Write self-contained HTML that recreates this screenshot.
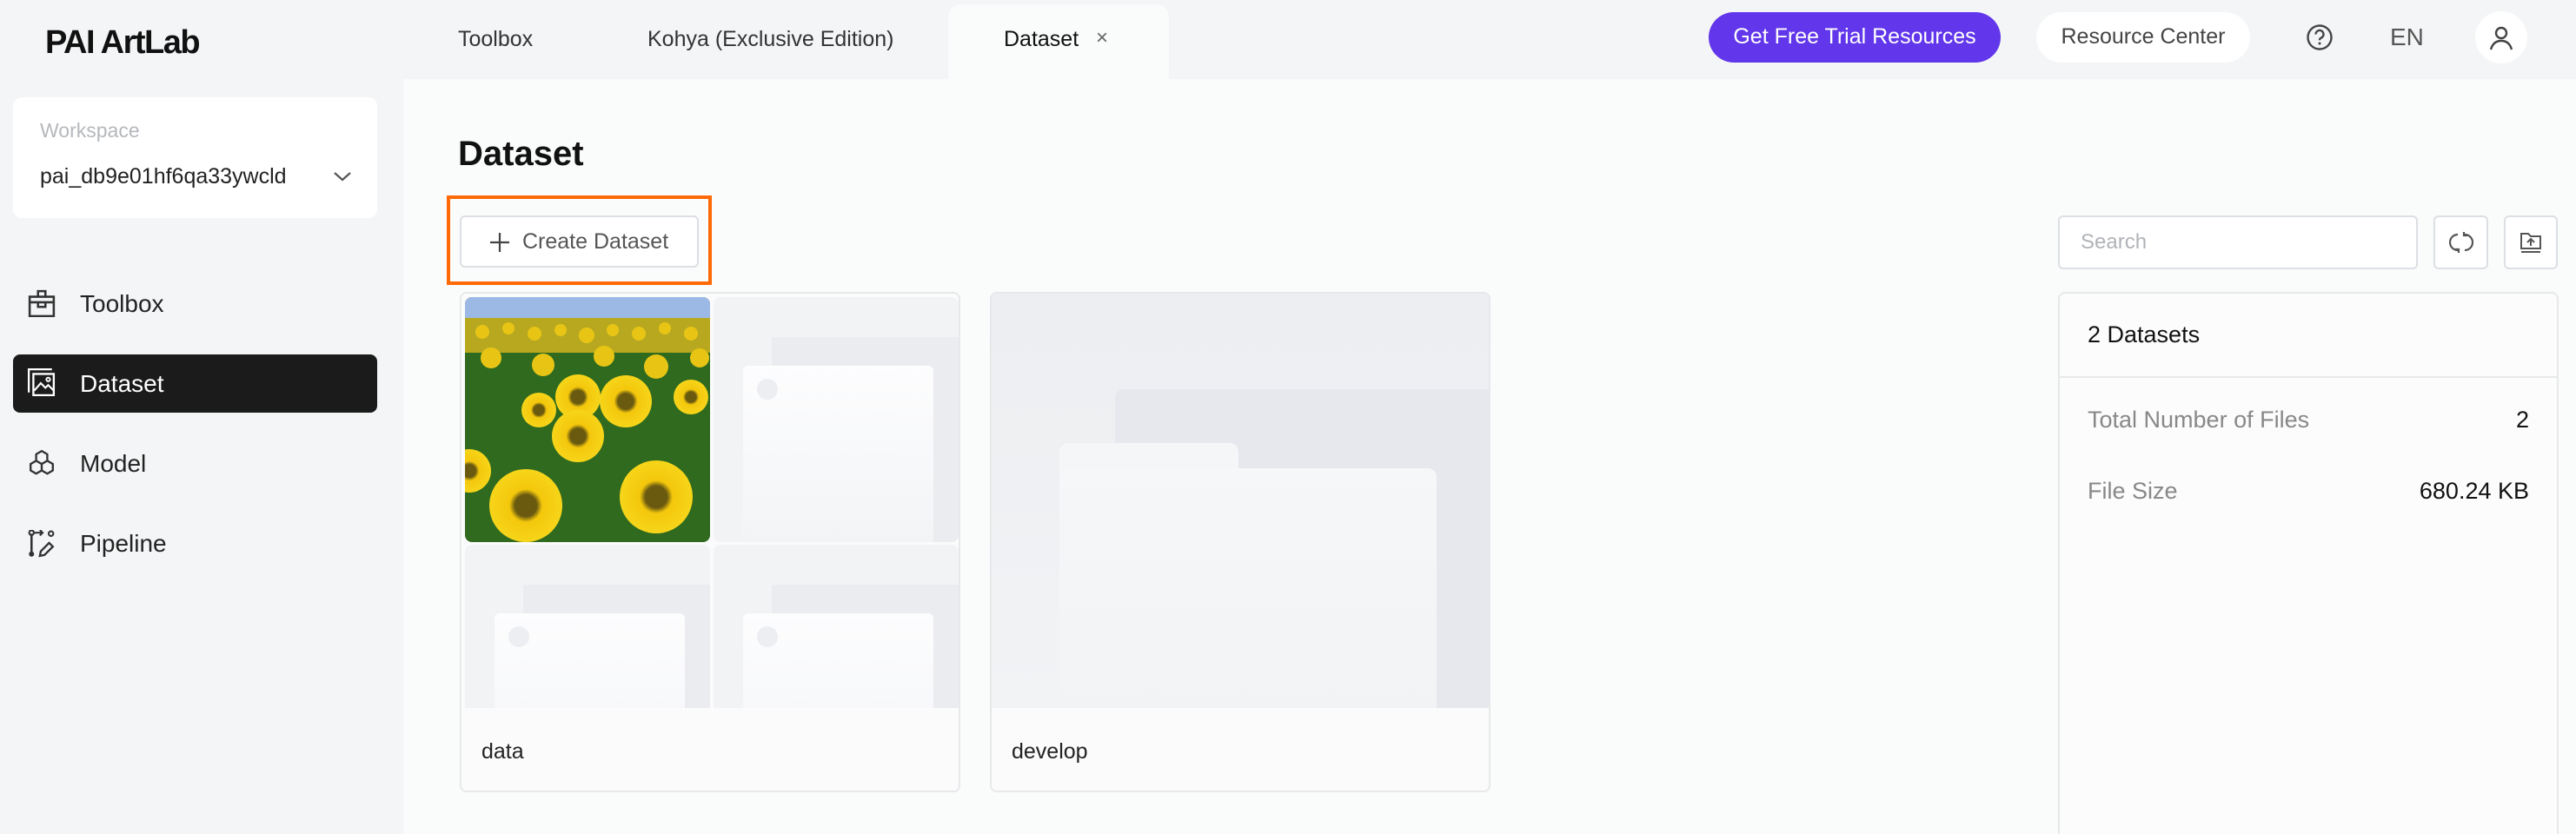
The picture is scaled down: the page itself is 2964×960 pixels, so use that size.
<!DOCTYPE html>
<html style="overflow:hidden;width:2964px;height:960px"><head><meta charset="utf-8"><style>
*{box-sizing:border-box;margin:0;padding:0}
body{width:2964px;height:960px;overflow:hidden;background:#f3f5f6;font-family:"Liberation Sans",sans-serif;color:#1f1f1f;position:relative}
.a{position:absolute}
.t{position:absolute;white-space:nowrap;line-height:1}
</style></head><body>
<!-- top bar -->
<div class="t" style="left:52px;top:30px;font-size:38px;font-weight:bold;letter-spacing:-1.5px;color:#111">PAI ArtLab</div>
<div class="t" style="left:527px;top:33px;font-size:25px;color:#333">Toolbox</div>
<div class="t" style="left:745px;top:33px;font-size:25px;color:#333">Kohya (Exclusive Edition)</div>
<div class="a" style="left:1091px;top:5px;width:254px;height:90px;background:#fafbfb;border-radius:14px 14px 0 0"></div>
<div class="t" style="left:1155px;top:33px;font-size:25px;color:#111">Dataset</div>
<div class="t" style="left:1261px;top:32px;font-size:24px;color:#666">×</div>
<div class="a" style="left:1966px;top:14px;width:336px;height:58px;background:#6236ea;border-radius:29px"></div>
<div class="t" style="left:1966px;top:30px;width:336px;text-align:center;font-size:25px;color:#fff">Get Free Trial Resources</div>
<div class="a" style="left:2343px;top:14px;width:246px;height:58px;background:#fff;border-radius:29px"></div>
<div class="t" style="left:2343px;top:30px;width:246px;text-align:center;font-size:25px;color:#444">Resource Center</div>
<svg class="a" style="left:2653px;top:27px" width="32" height="32" viewBox="0 0 32 32"><circle cx="16" cy="16" r="13.5" fill="none" stroke="#444" stroke-width="2.4"/><path d="M11.5 12.5a4.5 4.5 0 1 1 6 4.2c-1.2.5-1.5 1.2-1.5 2.5" fill="none" stroke="#444" stroke-width="2.4"/><circle cx="16" cy="23" r="1.5" fill="#444"/></svg>
<div class="t" style="left:2750px;top:29px;font-size:28px;color:#555">EN</div>
<div class="a" style="left:2848px;top:13px;width:60px;height:60px;background:#fff;border-radius:50%"></div>
<svg class="a" style="left:2863px;top:28px" width="30" height="32" viewBox="0 0 30 32"><circle cx="15" cy="10" r="6" fill="none" stroke="#444" stroke-width="2.4"/><path d="M3 29c2-7 6-10 12-10s10 3 12 10" fill="none" stroke="#444" stroke-width="2.4"/></svg>

<!-- sidebar -->
<div class="a" style="left:15px;top:112px;width:419px;height:139px;background:#fff;border-radius:10px"></div>
<div class="t" style="left:46px;top:139px;font-size:23px;color:#b5b8bc">Workspace</div>
<div class="t" style="left:46px;top:191px;font-size:25px;color:#222">pai_db9e01hf6qa33ywcld</div>
<svg class="a" style="left:383px;top:196px" width="22" height="14" viewBox="0 0 22 14"><path d="M2 3l9 8 9-8" fill="none" stroke="#555" stroke-width="2.2"/></svg>

<svg class="a" style="left:32px;top:333px" width="32" height="32" viewBox="0 0 30 30"><path d="M2 8h26v21H2zM2 14h26M11 8V2h8v6M11 14v5h8v-5" fill="none" stroke="#333" stroke-width="2.4"/></svg>
<div class="t" style="left:92px;top:336px;font-size:28px;color:#222">Toolbox</div>
<div class="a" style="left:15px;top:408px;width:419px;height:67px;background:#1b1b1b;border-radius:8px"></div>
<svg class="a" style="left:32px;top:424px" width="32" height="32" viewBox="0 0 30 30"><path d="M1 26V1h25" fill="none" stroke="#fff" stroke-width="2.2"/><path d="M6 6h22v23H6z" fill="none" stroke="#fff" stroke-width="2.2"/><path d="M7 24l7-8 5 5 3-3 6 6" fill="none" stroke="#fff" stroke-width="2"/><circle cx="22" cy="12" r="2" fill="none" stroke="#fff" stroke-width="1.8"/></svg>
<div class="t" style="left:92px;top:428px;font-size:28px;color:#fff">Dataset</div>
<svg class="a" style="left:32px;top:517px" width="32" height="32" viewBox="0 0 30 30"><path d="M15 2l6 3.5v7L15 16l-6-3.5v-7zM9 12.5l6 3.5v7l-6 3.5-6-3.5v-7zM21 12.5l6 3.5v7l-6 3.5-6-3.5" fill="none" stroke="#333" stroke-width="2.2" stroke-linejoin="round"/></svg>
<div class="t" style="left:92px;top:520px;font-size:28px;color:#222">Model</div>
<svg class="a" style="left:32px;top:610px" width="32" height="32" viewBox="0 0 30 30"><path d="M4 4v21" stroke="#333" stroke-width="2.4"/><circle cx="4" cy="26" r="2.8" fill="#333"/><circle cx="4" cy="3" r="2.5" fill="none" stroke="#333" stroke-width="2"/><path d="M7 3h9m-3-3l3 3-3 3" fill="none" stroke="#333" stroke-width="2"/><circle cx="25" cy="4" r="2.5" fill="none" stroke="#333" stroke-width="2"/><path d="M13 28l1-5 9-9 4 4-9 9z" fill="none" stroke="#333" stroke-width="2.2"/></svg>
<div class="t" style="left:92px;top:612px;font-size:28px;color:#222">Pipeline</div>

<!-- main -->
<div class="a" style="left:464px;top:91px;width:2500px;height:869px;background:#fafbfb"></div>
<div class="t" style="left:527px;top:157px;font-size:40px;font-weight:bold;color:#111">Dataset</div>
<div class="a" style="left:514px;top:225px;width:305px;height:103px;border:4px solid #ff6a06"></div>
<div class="a" style="left:529px;top:248px;width:275px;height:60px;border:2px solid #dcdfe3;border-radius:6px;background:#fff"></div>
<svg class="a" style="left:563px;top:267px" width="24" height="24" viewBox="0 0 24 24"><path d="M12 1v22M1 12h22" stroke="#444" stroke-width="2.2"/></svg>
<div class="t" style="left:601px;top:266px;font-size:25px;color:#555">Create Dataset</div>

<!-- card 1 -->
<div class="a" style="left:529px;top:336px;width:576px;height:576px;border:2px solid #e6e8ea;border-radius:8px;background:#fcfbfc;overflow:hidden">
 <svg class="a" style="left:4px;top:4px" width="282" height="282" viewBox="0 0 282 282">
  <defs><clipPath id="c"><rect width="282" height="282" rx="8"/></clipPath><radialGradient id="f"><stop offset="0.3" stop-color="#6a5a10"/><stop offset="0.45" stop-color="#f3c70c"/><stop offset="1" stop-color="#f7d51a"/></radialGradient></defs>
  <g clip-path="url(#c)">
  <rect width="282" height="282" fill="#2f6a1e"/>
  <rect width="282" height="26" fill="#9cb9e6"/>
  <rect y="24" width="282" height="40" fill="#b8a820"/>
  <g fill="#e8c515"><circle cx="20" cy="40" r="8"/><circle cx="50" cy="36" r="7"/><circle cx="80" cy="42" r="8"/><circle cx="110" cy="38" r="7"/><circle cx="140" cy="44" r="9"/><circle cx="170" cy="38" r="7"/><circle cx="200" cy="42" r="8"/><circle cx="230" cy="36" r="7"/><circle cx="260" cy="42" r="8"/><circle cx="30" cy="70" r="12"/><circle cx="90" cy="78" r="13"/><circle cx="160" cy="68" r="12"/><circle cx="220" cy="80" r="14"/><circle cx="270" cy="70" r="11"/></g>
  <circle cx="130" cy="115" r="26" fill="url(#f)"/><circle cx="185" cy="120" r="30" fill="url(#f)"/><circle cx="85" cy="130" r="20" fill="url(#f)"/><circle cx="260" cy="115" r="20" fill="url(#f)"/><circle cx="130" cy="160" r="30" fill="url(#f)"/><circle cx="70" cy="240" r="42" fill="url(#f)"/><circle cx="220" cy="230" r="42" fill="url(#f)"/><circle cx="5" cy="200" r="25" fill="url(#f)"/>
  </g></svg>
 <div class="a" style="left:290px;top:4px;width:282px;height:282px;background:#f1f3f5;border-radius:8px;overflow:hidden"><div class="a" style="left:67px;top:46px;width:215px;height:236px;background:#eaecef"></div><div class="a" style="left:34px;top:79px;width:219px;height:210px;background:linear-gradient(#fdfdfe,#f2f4f6);border-radius:6px"></div><div class="a" style="left:50px;top:94px;width:24px;height:24px;border-radius:50%;background:#eceef1"></div></div>
 <div class="a" style="left:4px;top:289px;width:282px;height:282px;background:#f1f3f5;border-radius:8px;overflow:hidden"><div class="a" style="left:67px;top:46px;width:215px;height:236px;background:#eaecef"></div><div class="a" style="left:34px;top:79px;width:219px;height:210px;background:linear-gradient(#fdfdfe,#f2f4f6);border-radius:6px"></div><div class="a" style="left:50px;top:94px;width:24px;height:24px;border-radius:50%;background:#eceef1"></div></div>
 <div class="a" style="left:290px;top:289px;width:282px;height:282px;background:#f1f3f5;border-radius:8px;overflow:hidden"><div class="a" style="left:67px;top:46px;width:215px;height:236px;background:#eaecef"></div><div class="a" style="left:34px;top:79px;width:219px;height:210px;background:linear-gradient(#fdfdfe,#f2f4f6);border-radius:6px"></div><div class="a" style="left:50px;top:94px;width:24px;height:24px;border-radius:50%;background:#eceef1"></div></div>
 <div class="a" style="left:0;top:477px;width:576px;height:100px;background:#fcfbfc"></div>
 <div class="t" style="left:23px;top:515px;font-size:25px;color:#222">data</div>
</div>

<!-- card 2 -->
<div class="a" style="left:1139px;top:336px;width:576px;height:576px;border:2px solid #e6e8ea;border-radius:8px;background:#fcfbfc;overflow:hidden">
 <div class="a" style="left:0;top:0;width:576px;height:477px;background:linear-gradient(#eceef1,#f1f3f5)"></div>
 <div class="a" style="left:142px;top:110px;width:434px;height:367px;background:#e7e8ee;border-radius:10px 0 0 0"></div>
 <div class="a" style="left:78px;top:172px;width:206px;height:40px;background:#f4f6f7;border-radius:10px 10px 0 0"></div>
 <div class="a" style="left:78px;top:201px;width:434px;height:276px;background:linear-gradient(#f6f7f8,#f1f3f5);border-radius:10px 10px 0 0"></div>
 <div class="a" style="left:0;top:477px;width:576px;height:100px;background:#fcfbfc"></div>
 <div class="t" style="left:23px;top:515px;font-size:25px;color:#222">develop</div>
</div>

<!-- right panel -->
<div class="a" style="left:2368px;top:248px;width:414px;height:62px;border:2px solid #dcdfe3;border-radius:6px;background:#fff"></div>
<div class="t" style="left:2394px;top:267px;font-size:24px;color:#b0b3b7">Search</div>
<div class="a" style="left:2800px;top:248px;width:63px;height:62px;border:2px solid #dcdfe3;border-radius:6px;background:#fff"></div>
<svg class="a" style="left:2818px;top:265px" width="28" height="28" viewBox="0 0 28 28"><path d="M10 5a9 9 0 0 0 0 18M7 22h4v4" fill="none" stroke="#555" stroke-width="2.2"/><path d="M18 23a9 9 0 0 0 0-18M21 6h-4V2" fill="none" stroke="#555" stroke-width="2.2"/></svg>
<div class="a" style="left:2881px;top:248px;width:62px;height:62px;border:2px solid #dcdfe3;border-radius:6px;background:#fff"></div>
<svg class="a" style="left:2899px;top:266px" width="26" height="26" viewBox="0 0 26 26"><path d="M2 20V3h8l3 3h11v14z" fill="none" stroke="#555" stroke-width="2"/><path d="M2 24h22M13 17V9m-4 4l4-4 4 4" fill="none" stroke="#555" stroke-width="2"/></svg>
<div class="a" style="left:2368px;top:336px;width:576px;height:624px;border:2px solid #e6e8ea;border-bottom:none;border-radius:8px 8px 0 0;background:#fcfcfd"></div>
<div class="a" style="left:2370px;top:433px;width:572px;height:2px;background:#e6e8ea"></div>
<div class="t" style="left:2402px;top:372px;font-size:27px;color:#111">2 Datasets</div>
<div class="t" style="left:2402px;top:470px;font-size:27px;color:#888">Total Number of Files</div>
<div class="t" style="left:2700px;top:470px;width:210px;text-align:right;font-size:27px;color:#111">2</div>
<div class="t" style="left:2402px;top:552px;font-size:27px;color:#888">File Size</div>
<div class="t" style="left:2700px;top:552px;width:210px;text-align:right;font-size:27px;color:#111">680.24 KB</div>
</body></html>
